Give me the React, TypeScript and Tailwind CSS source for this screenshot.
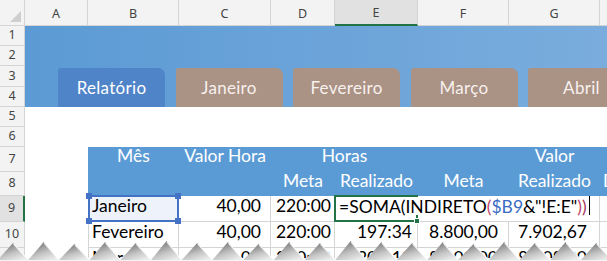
import React from 'react';

const cellFont = { fontFamily: 'Lato, "Liberation Sans", sans-serif' };
const uiFont = { fontFamily: '"Noto Sans", "Liberation Sans", sans-serif' };

const colLetters = ['A', 'B', 'C', 'D', 'E', 'F', 'G', 'H'];
const rowNums = [1, 2, 3, 4, 5, 6, 7, 8, 9, 10, 11];
const tabs = ['Relatório', 'Janeiro', 'Fevereiro', 'Março', 'Abril'];

// grid column / row classes written out so tailwind picks them up
const colStart = ['col-start-2', 'col-start-3', 'col-start-4', 'col-start-5', 'col-start-6', 'col-start-7', 'col-start-8', 'col-start-9'];
const rowStart = ['row-start-2', 'row-start-3', 'row-start-4', 'row-start-5', 'row-start-6', 'row-start-7', 'row-start-8', 'row-start-9', 'row-start-10', 'row-start-11', 'row-start-12'];

const bodyRows = [
  ['Fevereiro', '40,00', '220:00', '197:34', '8.800,00', '7.902,67'],
  ['Março', '40,00', '220:00', '205:12', '8.800,00', '8.208,00'],
];
const padR = ['', 'pr-[9px]', 'pr-[3px]', 'pr-[5px]', 'pr-[10px]', 'pr-[12px]'];

const TornEdge = () => {
  const peaks = Array.from({ length: 21 }, (_, i) => 13 + i * 30.7);
  const tops = [4, 3, 5, 3, 4, 2, 4, 3, 5, 3, 4, 2, 3, 4, 3, 5, 3, 4, 3, 4, 3];
  return (
    <svg className="absolute left-0 bottom-0 z-30" width="607" height="22" viewBox="0 0 607 22">
      <defs>
        <linearGradient id="mt" x1="0.15" y1="0" x2="0.75" y2="1">
          <stop offset="0" stopColor="#6c6c6c" />
          <stop offset="0.3" stopColor="#959595" />
          <stop offset="0.6" stopColor="#c4c4c4" />
          <stop offset="1" stopColor="#ececec" />
        </linearGradient>
      </defs>
      <rect x="0" y="19" width="607" height="3" fill="#f4f4f4" />
      {peaks.map((x, i) => (
        <polygon key={i} points={`${x - 15.4},21 ${x},${tops[i]} ${x + 15.4},21`} fill="url(#mt)" />
      ))}
      {peaks.map((x, i) => (
        <polyline key={`l${i}`} points={`${x + 0.5},${tops[i] + 1} ${x + 15.4},21`} fill="none" stroke="#ffffff" strokeWidth="1.2" strokeOpacity="0.8" />
      ))}
    </svg>
  );
};

export default function App() {
  return (
    <div className="relative w-[607px] h-[261px] overflow-hidden bg-white">
      <div className="grid grid-cols-[25px_63px_91px_92px_64px_83px_91px_91px_100px] grid-rows-[26px_20px_20px_21px_20px_20px_20px_25px_24px_26px_26px_26px]">
        {/* corner */}
        <div className="col-start-1 row-start-1 bg-[#f3f3f3] border-r border-b border-[#d4d4d4] relative">
          <svg className="absolute right-[3px] bottom-[3px]" width="11" height="11" viewBox="0 0 11 11">
            <polygon points="11,0 11,11 0,11" fill="#cfcfcf" />
          </svg>
        </div>

        {/* column headers */}
        {colLetters.map((c, i) => (
          <div
            key={c}
            style={uiFont}
            className={`${colStart[i]} row-start-1 flex items-center justify-center text-[12.5px] pt-[3px] text-[#444] ${
              c === 'E' ? 'bg-[#e1e1e1] border-b-2 border-b-[#217346] border-r border-r-[#d4d4d4]' : 'bg-[#f3f3f3] border-r border-b border-[#d4d4d4]'
            }`}
          >
            {c}
          </div>
        ))}

        {/* row headers */}
        {rowNums.map((n, i) => (
          <div
            key={n}
            style={uiFont}
            className={`col-start-1 ${rowStart[i]} flex items-center justify-center text-[12.5px] text-[#444] ${
              n === 9 ? 'bg-[#e1e1e1] border-r-2 border-r-[#217346] border-b border-b-[#d4d4d4]' : 'bg-[#f3f3f3] border-r border-b border-[#d4d4d4]'
            }`}
          >
            {n}
          </div>
        ))}

        {/* banner with tabs */}
        <div className="col-start-2 col-span-8 row-start-2 row-span-4 bg-gradient-to-r from-[#5b9ad4] to-[#7fb0df] flex items-end pl-[33px] gap-[10.5px]">
          {tabs.map((t, i) => (
            <div
              key={t}
              style={cellFont}
              className={`shrink-0 w-[107px] h-[39px] rounded-tl-[3px] rounded-tr-[7px] flex items-center justify-center text-[17px] tracking-[0.3px] ${
                i === 0 ? 'bg-[#4f84c8] text-white' : 'bg-[#aa9285] text-[#f7f1ee]'
              }`}
            >
              {t}
            </div>
          ))}
        </div>

        {/* table header row 7 */}
        <div style={cellFont} className="col-start-3 row-start-8 bg-[#5b9bd5] text-white text-[17.5px] flex items-end justify-center pb-[3px]">Mês</div>
        <div style={cellFont} className="col-start-4 row-start-8 bg-[#5b9bd5] text-white text-[17.5px] flex items-end justify-center pb-[3px] whitespace-nowrap">Valor Hora</div>
        <div style={cellFont} className="col-start-5 col-span-2 row-start-8 bg-[#5b9bd5] text-white text-[17.5px] flex items-end justify-center pb-[3px]">Horas</div>
        <div className="col-start-7 row-start-8 bg-[#5b9bd5]" />
        <div style={cellFont} className="col-start-8 row-start-8 bg-[#5b9bd5] text-white text-[17.5px] flex items-end justify-center pb-[3px]">Valor</div>
        <div className="col-start-9 row-start-8 bg-[#5b9bd5]" />

        {/* table header row 8 */}
        <div className="col-start-3 row-start-9 bg-[#5b9bd5]" />
        <div className="col-start-4 row-start-9 bg-[#5b9bd5]" />
        <div style={cellFont} className="col-start-5 row-start-9 bg-[#5b9bd5] text-white text-[17.5px] flex items-end justify-center pb-[2px]">Meta</div>
        <div style={cellFont} className="col-start-6 row-start-9 bg-[#5b9bd5] text-white text-[17.5px] flex items-end justify-center pb-[2px]">Realizado</div>
        <div style={cellFont} className="col-start-7 row-start-9 bg-[#5b9bd5] text-white text-[17.5px] flex items-end justify-center pb-[2px]">Meta</div>
        <div style={cellFont} className="col-start-8 row-start-9 bg-[#5b9bd5] text-white text-[17.5px] flex items-end justify-center pb-[2px]">Realizado</div>
        <div style={cellFont} className="col-start-9 row-start-9 bg-[#5b9bd5] text-white text-[17.5px] flex items-end pl-[3px] pb-[2px] whitespace-nowrap overflow-hidden">Diferença</div>

        {/* row 9 */}
        <div style={cellFont} className="col-start-3 row-start-10 relative bg-[#eef3fb] border-l border-b border-r border-[#d4d4d4] text-[17.5px] text-black flex items-end pl-[3px] pb-[2px]">
          Janeiro
          <div className="absolute -left-[1px] -top-[1px] -right-[1px] -bottom-[1px] border-2 border-[#4472c4] z-10" />
          <div className="absolute -left-[3px] -top-[3px] w-[6px] h-[6px] bg-[#4472c4] z-10" />
          <div className="absolute -right-[3px] -top-[3px] w-[6px] h-[6px] bg-[#4472c4] z-10" />
          <div className="absolute -left-[3px] -bottom-[3px] w-[6px] h-[6px] bg-[#4472c4] z-10" />
          <div className="absolute -right-[3px] -bottom-[3px] w-[6px] h-[6px] bg-[#4472c4] z-10" />
        </div>
        <div style={cellFont} className="col-start-4 row-start-10 border-b border-r border-[#d4d4d4] text-[17.5px] text-black flex items-end justify-end pr-[9px] pb-[2px]">40,00</div>
        <div style={cellFont} className="col-start-5 row-start-10 border-b border-r border-[#d4d4d4] text-[17.5px] text-black flex items-end justify-end pr-[3px] pb-[2px]">220:00</div>
        <div className="col-start-6 row-start-10 relative border-b border-r border-[#d4d4d4]">
          <div className="absolute -left-[1px] -top-[1px] -right-[1px] -bottom-[1px] border-2 border-[#217346] z-10" />
          <div className="absolute -right-[3px] -bottom-[3px] w-[6px] h-[6px] bg-[#217346] border border-white z-10" />
          <div style={cellFont} className="absolute left-[1px] top-[1px] h-[18px] w-[256px] bg-white z-20 flex items-end pl-[3px] text-[17.5px] text-black whitespace-nowrap leading-none">
            <span>=SOMA(INDIRETO</span>
            <span className="text-[#c0466c]">(</span>
            <span className="text-[#3a6cc4]">$B9</span>
            <span>&amp;"!E:E"</span>
            <span className="text-[#c0466c]">)</span>
            <span className="text-[#a8385c]">)</span>
            <span className="inline-block w-[1px] h-[19px] bg-black ml-[2px]" />
          </div>
        </div>
        <div className="col-start-7 row-start-10 border-b border-[#d4d4d4]" />
        <div className="col-start-8 row-start-10 border-b border-r border-[#d4d4d4]" />
        <div className="col-start-9 row-start-10 border-b border-[#d4d4d4]" />

        {/* rows 10 and 11 */}
        {bodyRows.map((r, ri) => (
          <React.Fragment key={ri}>
            {r.map((v, ci) => (
              <div
                key={ci}
                style={cellFont}
                className={`${colStart[ci + 1]} ${rowStart[ri + 9]} border-b border-r border-[#d4d4d4] text-[17.5px] text-black flex items-end pb-[2px] whitespace-nowrap ${
                  ci === 0 ? 'border-l pl-[3px]' : `justify-end ${padR[ci]}`
                }`}
              >
                {v}
              </div>
            ))}
            <div className={`col-start-9 ${rowStart[ri + 9]} border-b border-[#d4d4d4]`} />
          </React.Fragment>
        ))}
      </div>
      <TornEdge />
    </div>
  );
}
